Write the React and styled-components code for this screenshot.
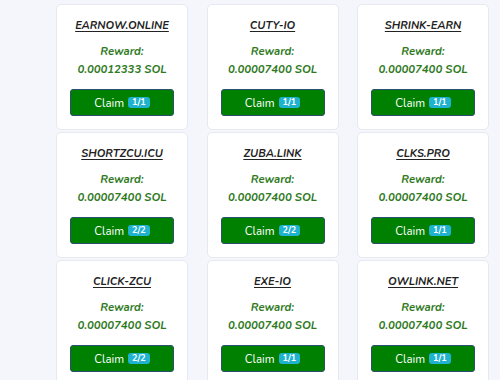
import React from "react";
import styled, { createGlobalStyle } from "styled-components";

const GlobalStyle = createGlobalStyle`
  html, body {
    margin: 0;
    padding: 0;
    background: #f4f6fb;
    font-family: "Nunito", "Lato", "Open Sans", sans-serif;
  }
`;

const sites = [
  { name: "EARNOW.ONLINE", reward: "0.00012333", count: "1/1" },
  { name: "CUTY-IO", reward: "0.00007400", count: "1/1" },
  { name: "SHRINK-EARN", reward: "0.00007400", count: "1/1" },
  { name: "SHORTZCU.ICU", reward: "0.00007400", count: "2/2" },
  { name: "ZUBA.LINK", reward: "0.00007400", count: "2/2" },
  { name: "CLKS.PRO", reward: "0.00007400", count: "1/1" },
  { name: "CLICK-ZCU", reward: "0.00007400", count: "2/2" },
  { name: "EXE-IO", reward: "0.00007400", count: "1/1" },
  { name: "OWLINK.NET", reward: "0.00007400", count: "1/1" },
];

const App = () => {
  return (
    <>
      <GlobalStyle />
      <Wrapper>
        <Grid>
          {sites.map((s) => (
            <Card key={s.name}>
              <Title>{s.name}</Title>
              <Reward>
                Reward:
                <br />
                {s.reward} SOL
              </Reward>
              <ClaimButton>
                Claim <Badge>{s.count}</Badge>
              </ClaimButton>
            </Card>
          ))}
        </Grid>
      </Wrapper>
    </>
  );
};

const Wrapper = styled.section`
  height: 380px;
  overflow: hidden;
  padding: 4px 12px 0 56px;
  box-sizing: border-box;
`;

const Grid = styled.div`
  display: grid;
  grid-template-columns: repeat(3, 132px);
  column-gap: 18.5px;
  row-gap: 2px;
`;

const Card = styled.div`
  background: #fff;
  border: 1px solid #e6e9f2;
  border-radius: 5px;
  padding: 13px 13px 13px;
  display: flex;
  flex-direction: column;
  align-items: center;
  box-sizing: border-box;
`;

const Title = styled.div`
  font-size: 11px;
  line-height: 16px;
  font-weight: 700;
  font-style: italic;
  color: #222;
  text-decoration: underline;
  text-underline-offset: 2px;
`;

const Reward = styled.div`
  margin-top: 9px;
  font-size: 11.3px;
  line-height: 18px;
  font-weight: 700;
  font-style: italic;
  color: #2f7a1e;
  text-align: center;
`;

const ClaimButton = styled.button`
  margin-top: 10px;
  width: 104px;
  height: 27px;
  background: #008000;
  border: 1px solid #2d4f6e;
  border-radius: 3px;
  color: #fff;
  font-family: inherit;
  font-size: 11.5px;
  display: flex;
  align-items: center;
  justify-content: center;
  gap: 4px;
  cursor: pointer;
`;

const Badge = styled.span`
  background: #1fb3cf;
  color: #fff;
  font-size: 9px;
  font-weight: 700;
  border-radius: 3px;
  padding: 0 4px;
  line-height: 11px;
`;

export default App;
